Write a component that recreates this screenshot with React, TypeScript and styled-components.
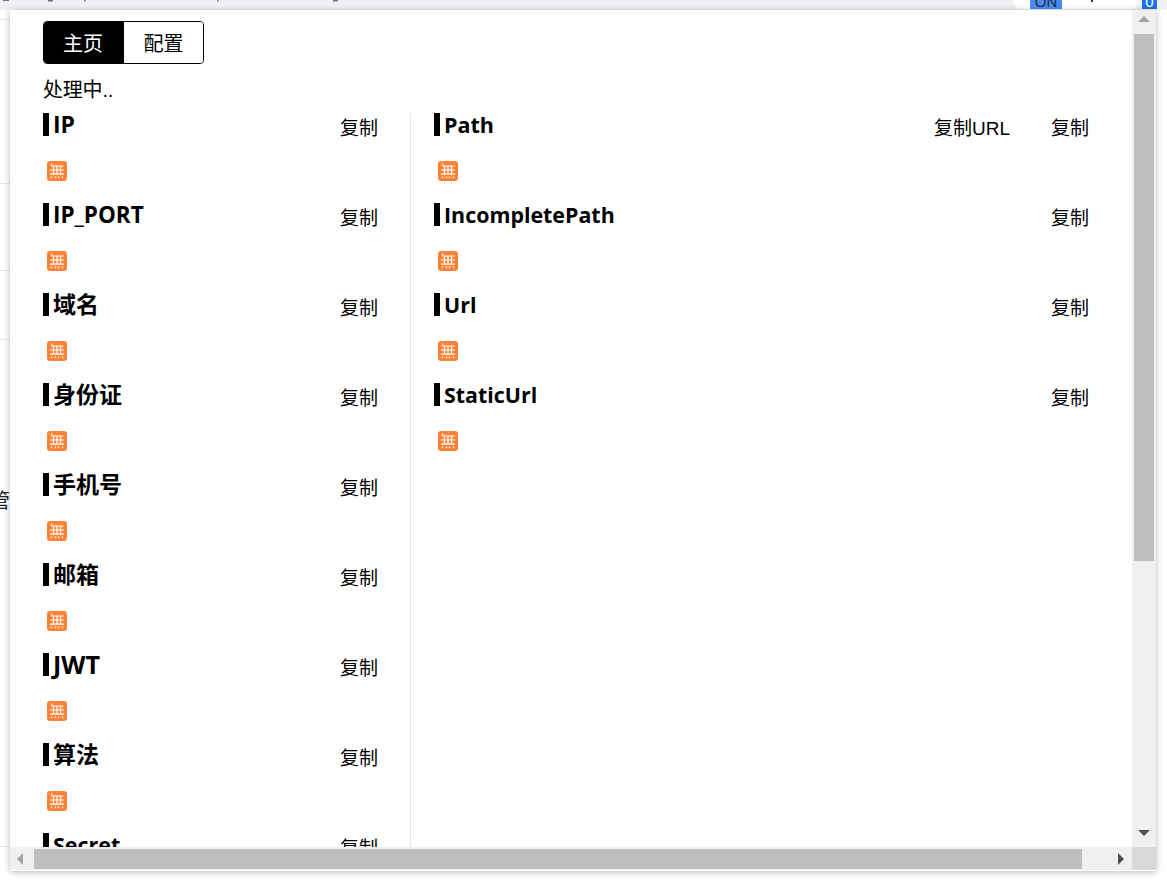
import React from "react";
import styled, { createGlobalStyle } from "styled-components";

const Global = createGlobalStyle`
  html, body { margin: 0; padding: 0; height: 880px; overflow: hidden; background: #fff; }
  #root { height: 880px; }
  * { box-sizing: border-box; }
`;

const CJK = `"Liberation Sans", "Noto Sans CJK SC", sans-serif`;

const Stage = styled.div`
  position: relative;
  display: flex;
  flex-direction: column;
  width: 1167px;
  height: 880px;
  overflow: hidden;
  background: #fff;
  padding-bottom: 9px;
`;
const BackPage = styled.div`
  position: absolute;
  left: 0;
  top: 0;
  width: 10px;
  height: 880px;
  overflow: hidden;
  display: flex;
  justify-content: flex-end;
  padding-top: 485px;
  background:
    linear-gradient(#e6e6e6, #e6e6e6) 0 183px / 100% 1px no-repeat,
    linear-gradient(#e6e6e6, #e6e6e6) 0 270px / 100% 1px no-repeat,
    linear-gradient(#e6e6e6, #e6e6e6) 0 339px / 100% 1px no-repeat,
    linear-gradient(#e6e6e6, #e6e6e6) 0 846px / 100% 1px no-repeat,
    linear-gradient(#e6e6e6, #e6e6e6) 0 19px / 100% 1px no-repeat;
  font: 20px ${CJK};
  color: #222;
  white-space: nowrap;
`;
const TopStrip = styled.header`
  position: relative;
  flex: none;
  display: flex;
  align-items: flex-start;
  height: 10px;
  background: #eff1f4;
`;
const Specks = styled.svg`
  flex: none;
  width: 400px;
  height: 10px;
  display: block;
`;
const StripGap = styled.div`
  flex: none;
  width: 600px;
`;
const ExtBadge = styled.div<{ $bg: string; $color: string; $w: number }>`
  flex: none;
  width: ${(p) => p.$w}px;
  height: 9px;
  overflow: hidden;
  background: ${(p) => p.$bg};
  color: ${(p) => p.$color};
  font: 15px/1 "Liberation Sans", sans-serif;
  display: flex;
  justify-content: center;
  align-items: flex-end;
`;
const ExtArea = styled.div`
  flex: none;
  width: 60px;
  height: 9px;
  background: #fff;
  display: flex;
  justify-content: center;
`;
const ExtDot = styled.i`
  width: 2px;
  height: 2px;
  margin-left: -1px;
  background: #3a2fa8;
`;
const ExtCurve = styled.div<{ $w: number; $dir: "left" | "right" }>`
  flex: none;
  width: ${(p) => p.$w}px;
  height: 9px;
  background: radial-gradient(
    circle at ${(p) => (p.$dir === "left" ? "100% -60%" : "0 -60%")},
    #fff 0 17px,
    #eff1f4 19px
  );
`;
const Popup = styled.main`
  position: relative;
  flex: 1;
  min-height: 0;
  margin: 0 11px 0 10px;
  display: grid;
  grid-template-columns: 1fr 24px;
  grid-template-rows: 1fr 23px;
  background: #fff;
  box-shadow: 0 1px 6px rgba(0, 0, 0, 0.3);
  border-bottom: 1px solid #fff;
  overflow: hidden;
`;
const Viewport = styled.div`
  overflow: hidden;
  padding: 11px 0 0 33px;
  color: #000;
  font-family: ${CJK};
`;
const Tabs = styled.div`
  display: inline-flex;
  height: 43px;
  border: 1px solid #000;
  border-radius: 4px;
  overflow: hidden;
  vertical-align: top;
`;
const Tab = styled.div<{ $active?: boolean }>`
  display: flex;
  align-items: center;
  justify-content: center;
  width: ${(p) => (p.$active ? 80 : 79)}px;
  padding-right: ${(p) => (p.$active ? 2 : 0)}px;
  background: ${(p) => (p.$active ? "#000" : "#fff")};
  color: ${(p) => (p.$active ? "#fff" : "#000")};
  font-size: 20px;
`;
const Status = styled.div`
  font-size: 20px;
  line-height: 28px;
  height: 28px;
  margin-top: 12px;
  letter-spacing: -0.2px;
`;
const Columns = styled.div`
  display: flex;
  margin-top: 9px;
`;
const Column = styled.div<{ $first?: boolean }>`
  flex: none;
  width: ${(p) => (p.$first ? 368 : 655)}px;
  height: 800px;
  padding-right: ${(p) => (p.$first ? 32 : 0)}px;
  margin-right: ${(p) => (p.$first ? 23 : 0)}px;
  border-right: ${(p) => (p.$first ? "1px solid #e5e5e5" : "none")};
`;
const Section = styled.section`
  height: 90px;
`;
const Header = styled.div`
  display: flex;
  align-items: flex-start;
  height: 45px;
`;
const Title = styled.h3<{ $size: number }>`
  flex: 1;
  margin: 0;
  height: 23px;
  padding-left: 4px;
  border-left: 6px solid #000;
  font: 700 ${(p) => p.$size}px/23px "Open Sans", "Noto Sans CJK SC", sans-serif;
  white-space: nowrap;
`;
const Copy = styled.span`
  font-size: 19px;
  line-height: 28px;
  margin-left: 41px;
  margin-top: 2px;
  white-space: nowrap;
`;
const BillIcon = styled.svg`
  display: block;
  width: 20px;
  height: 20px;
  margin-left: 4px;
  margin-top: 3px;
`;
const VTrack = styled.div`
  display: flex;
  flex-direction: column;
  align-items: center;
  padding: 2px 0 7px;
  background: #f0f0f0;
`;
const VThumb = styled.div`
  flex: none;
  width: 20px;
  height: 527px;
  margin-top: 8px;
  background: #bebebe;
`;
const Spring = styled.div`
  flex: 1;
`;
const Arrow = styled.svg`
  flex: none;
  display: block;
  width: 14px;
  height: 14px;
`;
const HTrack = styled.div`
  display: flex;
  align-items: center;
  padding: 0 4px 0 3px;
  background: #f0f0f0;
`;
const HThumb = styled.div`
  flex: none;
  width: 1048px;
  height: 20px;
  margin-left: 7px;
  background: #bebebe;
`;
const Corner = styled.div`
  background: #d9d9d9;
`;

const Bill = () => (
  <BillIcon viewBox="0 0 20 20">
    <rect width="20" height="20" rx="3" fill="#ff8237" />
    <path
      d="M5 2.5 4.2 4.6M4.5 5h12M3 9h14M3 13.2h14M6.5 5v8M10 5v8M13.5 5v8"
      stroke="#fff"
      strokeWidth="1.2"
      fill="none"
    />
    <path d="M4.5 15.2v2M8.5 15.2v2M11.5 15.2v2M15.5 15.2v2" stroke="#fff" strokeWidth="1.3" strokeOpacity="0.85" fill="none" />
  </BillIcon>
);

const Item = ({ title, size, extra }: { title: string; size: number; extra?: string }) => (
  <Section>
    <Header>
      <Title $size={size}>{title}</Title>
      {extra && <Copy>{extra}</Copy>}
      <Copy>复制</Copy>
    </Header>
    <Bill />
  </Section>
);

const left: [string, number][] = [
  ["IP", 23],
  ["IP_PORT", 22.5],
  ["域名", 23],
  ["身份证", 23],
  ["手机号", 23],
  ["邮箱", 23],
  ["JWT", 25],
  ["算法", 23],
  ["Secret", 21.5],
];
const right: [string, number, string?][] = [
  ["Path", 21.5, "复制URL"],
  ["IncompletePath", 21.4],
  ["Url", 21.4],
  ["StaticUrl", 21.4],
];

export default function App() {
  return (
    <Stage>
      <Global />
      <BackPage>管</BackPage>
      <TopStrip>
        <Specks viewBox="0 0 400 10">
          <path
            d="M3 0h6v1H3zM48 0h5v1.5h-5zM84 0h1.5v1.5H84zM217 0h1.5v1.5H217zM333 0h5v1.5h-5z"
            fill="#70757c"
          />
        </Specks>
        <StripGap />
        <ExtCurve $w={30} $dir="left" />
        <ExtBadge $bg="#4a8cf0" $color="#1b2b48" $w={32}>ON</ExtBadge>
        <ExtArea><ExtDot /></ExtArea>
        <ExtCurve $w={20} $dir="right" />
        <ExtBadge $bg="#1a73e8" $color="#fff" $w={15}>0</ExtBadge>
      </TopStrip>
      <Popup>
        <Viewport>
          <Tabs>
            <Tab $active>主页</Tab>
            <Tab>配置</Tab>
          </Tabs>
          <Status>处理中..</Status>
          <Columns>
            <Column $first>
              {left.map(([t, s]) => (
                <Item key={t} title={t} size={s} />
              ))}
            </Column>
            <Column>
              {right.map(([t, s, e]) => (
                <Item key={t} title={t} size={s} extra={e} />
              ))}
            </Column>
          </Columns>
        </Viewport>
        <VTrack>
          <Arrow viewBox="0 0 14 14"><path d="M1 10 7 4l6 6z" fill="#a3a3a3" /></Arrow>
          <VThumb />
          <Spring />
          <Arrow viewBox="0 0 14 14"><path d="M1 4h12L7 10z" fill="#505050" /></Arrow>
        </VTrack>
        <HTrack>
          <Arrow viewBox="0 0 14 14"><path d="M10 1v12L4 7z" fill="#a3a3a3" /></Arrow>
          <HThumb />
          <Spring />
          <Arrow viewBox="0 0 14 14"><path d="M4 1v12l6-6z" fill="#505050" /></Arrow>
        </HTrack>
        <Corner />
      </Popup>
    </Stage>
  );
}
